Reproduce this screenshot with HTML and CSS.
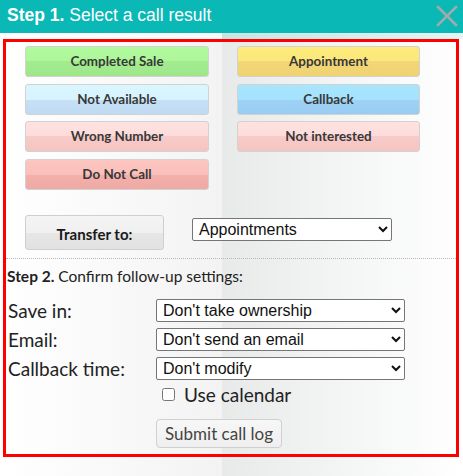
FILE: index.html
```html
<!DOCTYPE html>
<html>
<head>
<meta charset="utf-8">
<link rel="stylesheet" href="styles.css">
</head>
<body>
<div class="header">
  <div class="title"><b>Step 1.</b> Select a call result</div>
  <svg class="close" width="22" height="22" viewBox="0 0 22 22"><path d="M2 2L20 20M20 2L2 20" stroke="#a3abaa" stroke-width="2.6" stroke-linecap="square"/></svg>
</div>
<div class="strip"></div>
<div class="panel">
  <div class="results">
    <button class="res green">Completed Sale</button>
    <button class="res yellow">Appointment</button>
    <button class="res lblue">Not Available</button>
    <button class="res blue">Callback</button>
    <button class="res pink">Wrong Number</button>
    <button class="res pink">Not interested</button>
    <button class="res red">Do Not Call</button>
  </div>
  <div class="transfer">
    <button class="tbtn">Transfer to:</button>
    <select class="sel tsel"><option>Appointments</option></select>
  </div>
  <div class="divider"></div>
  <div class="step2"><b>Step 2.</b> Confirm follow-up settings:</div>
  <div class="form">
    <label class="lbl">Save in:</label>
    <select class="sel"><option>Don't take ownership</option></select>
    <label class="lbl">Email:</label>
    <select class="sel"><option>Don't send an email</option></select>
    <label class="lbl">Callback time:</label>
    <select class="sel"><option>Don't modify</option></select>
    <span></span>
    <label class="check"><input type="checkbox"> Use calendar</label>
    <span></span>
    <div><button class="submit">Submit call log</button></div>
  </div>
</div>
</body>
</html>
```

FILE: styles.css
```css
html, body {
  margin: 0;
  padding: 0;
}
body {
  width: 463px;
  height: 476px;
  overflow: hidden;
  font-family: Lato, "Open Sans", sans-serif;
  color: #222;
  background: linear-gradient(to right, #ffffff 0, #f3f3f3 222px, #e8eaea 222px, #ffffff 463px);
}
.header {
  height: 33px;
  background: #0ab8b6;
  display: flex;
  align-items: center;
  justify-content: space-between;
  padding: 0 7px 0 7px;
}
.title {
  font-family: "Liberation Sans", Arial, sans-serif;
  font-size: 17.5px;
  color: #fff;
  margin-top: -3px;
}
.close {
  margin-right: -2px;
  margin-top: -2px;
}
.strip {
  height: 6px;
  background: linear-gradient(to right, #ffffff 0, #f8fbfb 222px, #c4e6e3 222px, #e4f4f3 463px);
}
.panel {
  margin: 0 4px 0 3px;
  border: 3px solid #ff0000;
  height: 412px;
}
.results {
  display: grid;
  grid-template-columns: 184px 183px;
  column-gap: 28px;
  row-gap: 6.5px;
  padding: 4px 0 0 19px;
}
.res {
  height: 31px;
  border: 1px solid #d2d2d2;
  border-radius: 3px;
  font-family: Lato, sans-serif;
  font-weight: bold;
  font-size: 13.4px;
  color: #383838;
  padding: 0 0 1px 0;
}
.green { background: linear-gradient(#b2fa9e 0, #aef69a 50%, #a2ec8e 50%, #9fe68b 100%); }
.yellow { background: linear-gradient(#fdeb7c 0, #fbe77a 50%, #f3d776 50%, #efd272 100%); }
.lblue { background: linear-gradient(#daf6fe 0, #d6f3fe 50%, #c6e1f6 50%, #c0daf3 100%); }
.blue { background: linear-gradient(#a8e6fe 0, #a4e2fe 50%, #9ed3f6 50%, #98ccf2 100%); }
.pink { background: linear-gradient(#fee2e0 0, #fddcda 50%, #f8cbc8 50%, #f5c4c2 100%); }
.red { background: linear-gradient(#fcc6c1 0, #fbbfba 50%, #f4b0ab 50%, #efa9a5 100%); }

.transfer {
  display: flex;
  align-items: flex-start;
  gap: 28px;
  padding: 25px 0 0 19px;
}
.tbtn {
  width: 139px;
  height: 35px;
  border: 1px solid #cfcfcf;
  border-radius: 3px;
  background: linear-gradient(#f4f4f4 0, #f0f0f0 50%, #e6e6e6 50%, #e2e2e2 100%);
  font-family: Lato, sans-serif;
  font-weight: bold;
  font-size: 15px;
  color: #1a1a1a;
  padding: 3px 0 0 0;
}
.sel {
  height: 23px;
  font-family: "Liberation Sans", Arial, sans-serif;
  font-size: 16px;
  color: #111;
  background: #fff;
  border: 1px solid #767676;
  border-radius: 2px;
  padding: 0 2px;
  margin: 0;
}
.tsel {
  width: 200px;
  margin-top: 3px;
}
.divider {
  margin-top: 8px;
  border-top: 1px dotted #b8b8b8;
}
.step2 {
  font-size: 15.5px;
  padding: 7px 0 0 1px;
  height: 24px;
  line-height: 20px;
  color: #222;
}
.form {
  display: grid;
  grid-template-columns: 148px 249px;
  row-gap: 6px;
  padding: 9px 0 0 2px;
  align-items: center;
}
.form .sel {
  width: 249px;
}
.lbl {
  font-size: 19px;
  line-height: 23px;
  color: #222;
}
.check {
  display: flex;
  align-items: center;
  font-size: 19px;
  height: 24px;
  margin-top: -3px;
  color: #222;
}
.check input {
  width: 13px;
  height: 13px;
  margin: 0 9px 0 6px;
}
.submit {
  margin-top: 6px;
  width: 126px;
  height: 29px;
  border: 1px solid #d0d0d0;
  border-radius: 4px;
  background: linear-gradient(#f7f7f7, #efefef);
  font-family: Lato, sans-serif;
  font-size: 17px;
  color: #444;
  padding: 0;
}
```
